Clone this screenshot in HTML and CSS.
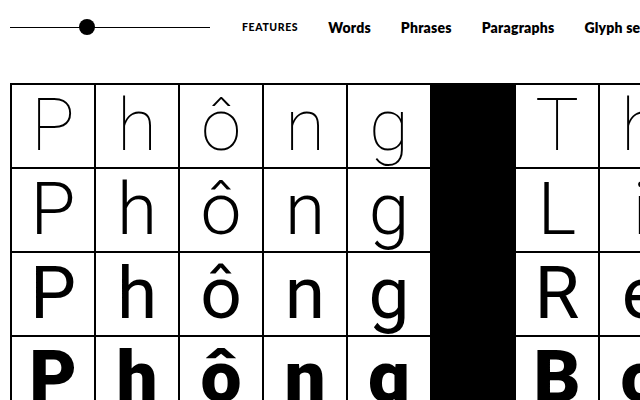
FILE: index.html
```html
<!DOCTYPE html>
<html lang="vi">
<head>
<meta charset="utf-8">
<title>Phông</title>
<link rel="stylesheet" href="styles.css">
</head>
<body>
<header class="top">
  <div class="slider">
    <div class="track"></div>
    <div class="knob"></div>
  </div>
  <nav class="nav">
    <a class="nav-caps">FEATURES</a>
    <a>Words</a>
    <a>Phrases</a>
    <a>Paragraphs</a>
    <a>Glyph set</a>
  </nav>
</header>
<main class="grid">
  <div class="cell w1">P</div><div class="cell w1">h</div><div class="cell w1">ô</div><div class="cell w1">n</div><div class="cell w1">g</div><div class="cell fill"></div><div class="cell w1">T</div><div class="cell w1">h</div>
  <div class="cell w2">P</div><div class="cell w2">h</div><div class="cell w2">ô</div><div class="cell w2">n</div><div class="cell w2">g</div><div class="cell fill"></div><div class="cell w2">L</div><div class="cell w2">i</div>
  <div class="cell w3">P</div><div class="cell w3">h</div><div class="cell w3">ô</div><div class="cell w3">n</div><div class="cell w3">g</div><div class="cell fill"></div><div class="cell w3">R</div><div class="cell w3">e</div>
  <div class="cell w4">P</div><div class="cell w4">h</div><div class="cell w4">ô</div><div class="cell w4">n</div><div class="cell w4">g</div><div class="cell fill"></div><div class="cell w4">B</div><div class="cell w4">o</div>
</main>
</body>
</html>
```
FILE: styles.css
```css
html, body {
  margin: 0;
  padding: 0;
  background: #fff;
  color: #000;
  overflow: hidden;
  width: 640px;
  height: 400px;
}
body {
  font-family: Lato, "Liberation Sans", sans-serif;
  padding-left: 10px;
}
.top {
  display: flex;
  align-items: center;
  height: 54px;
  white-space: nowrap;
}
.slider {
  position: relative;
  width: 200px;
  height: 16px;
  flex: none;
  display: flex;
  align-items: center;
}
.track {
  width: 100%;
  height: 1px;
  background: #000;
}
.knob {
  position: absolute;
  left: 69px;
  top: 0;
  width: 16px;
  height: 16px;
  border-radius: 50%;
  background: #000;
}
.nav {
  display: flex;
  align-items: center;
  gap: 30px;
  margin-left: 32px;
  flex: none;
}
.nav a {
  font-weight: 800;
  font-size: 14px;
  letter-spacing: 0.2px;
  color: #000;
  text-decoration: none;
}
.nav a.nav-caps {
  font-size: 10.5px;
  letter-spacing: 0.6px;
  font-weight: 900;
}
.grid {
  margin-top: 29px;
  display: grid;
  grid-template-columns: repeat(8, 84px);
  grid-auto-rows: 84px;
  border-left: 2px solid #000;
  border-top: 2px solid #000;
  width: max-content;
  font-family: Roboto, Lato, sans-serif;
}
.cell {
  border-right: 2px solid #000;
  border-bottom: 2px solid #000;
  display: flex;
  align-items: center;
  justify-content: center;
  font-size: 73px;
  line-height: 1;
  padding-bottom: 2px;
  box-sizing: border-box;
  overflow: hidden;
}
.fill {
  background: #000;
}
.w1 { font-weight: 100; }
.w2 { font-weight: 300; }
.w3 { font-weight: 400; }
.w4 { font-weight: 900; }
```
